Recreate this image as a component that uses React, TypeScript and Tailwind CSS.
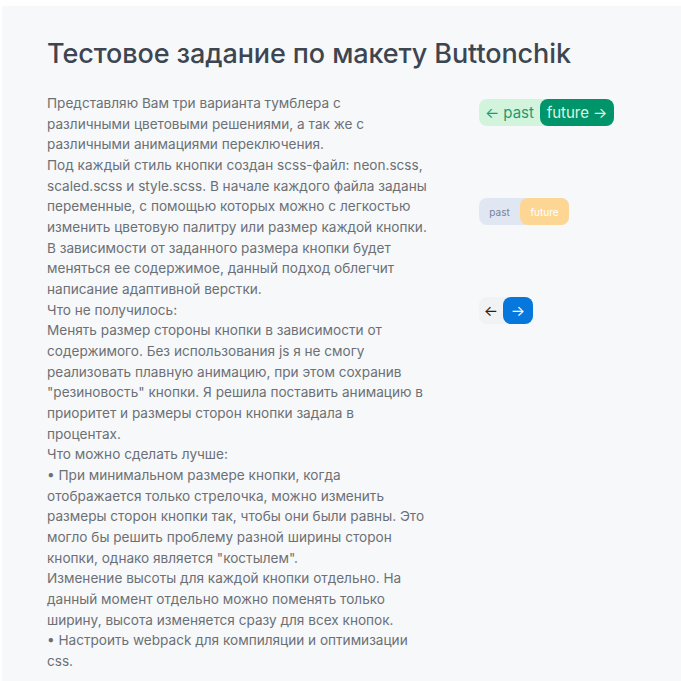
export default function App() {
  const lines = [
    "Представляю Вам три варианта тумблера с",
    "различными цветовыми решениями, а так же с",
    "различными анимациями переключения.",
    "Под каждый стиль кнопки создан scss-файл: neon.scss,",
    "scaled.scss и style.scss. В начале каждого файла заданы",
    "переменные, с помощью которых можно с легкостью",
    "изменить цветовую палитру или размер каждой кнопки.",
    "В зависимости от заданного размера кнопки будет",
    "меняться ее содержимое, данный подход облегчит",
    "написание адаптивной верстки.",
    "Что не получилось:",
    "Менять размер стороны кнопки в зависимости от",
    "содержимого. Без использования js я не смогу",
    "реализовать плавную анимацию, при этом сохранив",
    "\"резиновость\" кнопки. Я решила поставить анимацию в",
    "приоритет и размеры сторон кнопки задала в",
    "процентах.",
    "Что можно сделать лучше:",
    "• При минимальном размере кнопки, когда",
    "отображается только стрелочка, можно изменить",
    "размеры сторон кнопки так, чтобы они были равны. Это",
    "могло бы решить проблему разной ширины сторон",
    "кнопки, однако является \"костылем\".",
    "Изменение высоты для каждой кнопки отдельно. На",
    "данный момент отдельно можно поменять только",
    "ширину, высота изменяется сразу для всех кнопок.",
    "• Настроить webpack для компиляции и оптимизации",
    "css.",
  ];

  return (
    <div className="min-h-[681px] bg-white pt-[6px] pl-[2px] font-['Inter',sans-serif]">
      <div className="min-h-[675px] bg-[#f7f8fa] pl-[45px] pt-[30px] pb-6">
        <h1 className="text-[27px] leading-[36px] font-medium text-[#3d4650] tracking-[-0.1px]">
          Тестовое задание по макету Buttonchik
        </h1>

        <div className="mt-[21px] flex">
          {/* описание */}
          <div className="w-[432px] text-[13.6px] leading-[20.67px] text-[#6b7075]">
            {lines.map((l, i) => (
              <div key={i}>{l}</div>
            ))}
          </div>

          {/* кнопки */}
          <div className="flex flex-col pt-[6px] gap-[72px]">
            {/* neon */}
            <div className="flex h-[27px] w-[135px] rounded-lg bg-[#d2f4dd] text-[15px] leading-none">
              <div className="flex w-[61px] items-center pl-[6px] gap-[4px] text-[#1f9a6e]">
                <span>←</span>
                <span>past</span>
              </div>
              <div className="flex flex-1 items-center justify-center gap-[4px] rounded-lg bg-[#00946a] text-[#dcf6e6]">
                <span>future</span>
                <span>→</span>
              </div>
            </div>

            {/* scaled */}
            <div className="flex h-[27px] w-[90px] rounded-lg bg-[#e1e6f3] text-[10px] leading-none">
              <div className="flex w-[41px] items-center justify-center text-[#78819a]">
                past
              </div>
              <div className="flex flex-1 items-center justify-center rounded-lg bg-[#fed694] text-white">
                future
              </div>
            </div>

            {/* style */}
            <div className="flex h-[27px] w-[54px] rounded-lg bg-[#f1f2f4] text-[15px] leading-none">
              <div className="flex w-[24px] items-center justify-center text-[#222]">
                ←
              </div>
              <div className="flex flex-1 items-center justify-center rounded-lg bg-[#0677dc] text-white">
                →
              </div>
            </div>
          </div>
        </div>
      </div>
    </div>
  );
}
